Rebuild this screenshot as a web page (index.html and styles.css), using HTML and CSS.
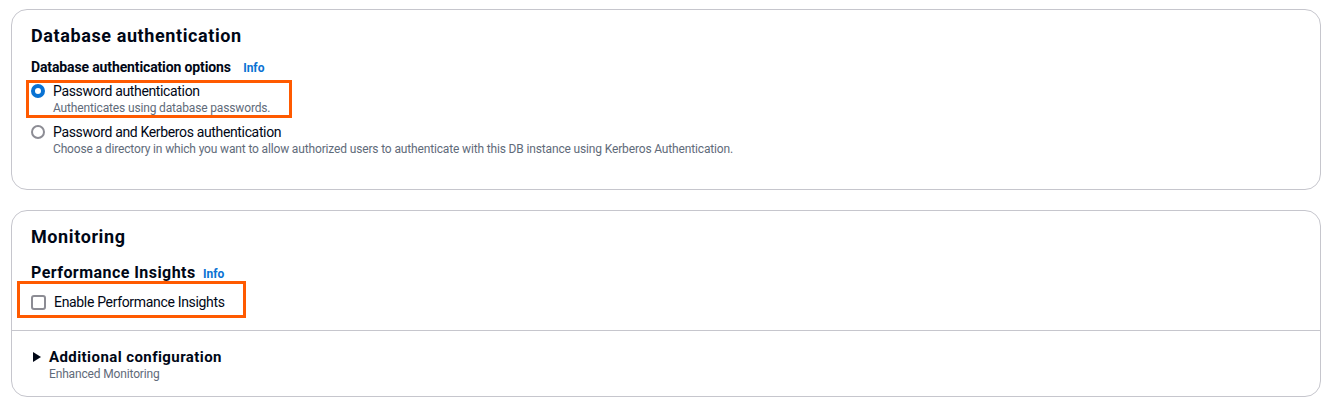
FILE: index.html
```html
<!DOCTYPE html>
<html lang="en">
<head>
<meta charset="utf-8">
<title>Database settings</title>
<link rel="stylesheet" href="styles.css">
</head>
<body>
<main class="page">
  <section class="card card-auth">
    <h2 class="card-title">Database authentication</h2>
    <div class="field-label">Database authentication options <a class="info" href="#">Info</a></div>
    <div class="radio-group">
      <label class="radio-item">
        <span class="radio radio-checked"></span>
        <span class="radio-text">
          <span class="radio-label">Password authentication</span>
          <span class="radio-desc">Authenticates using database passwords.</span>
        </span>
      </label>
      <label class="radio-item">
        <span class="radio"></span>
        <span class="radio-text">
          <span class="radio-label">Password and Kerberos authentication</span>
          <span class="radio-desc">Choose a directory in which you want to allow authorized users to authenticate with this DB instance using Kerberos Authentication.</span>
        </span>
      </label>
    </div>
    <div class="highlight highlight-auth"></div>
  </section>

  <section class="card card-monitor">
    <div class="card-body">
      <h2 class="card-title">Monitoring</h2>
      <div class="sub-title">Performance Insights <a class="info" href="#">Info</a></div>
      <label class="check-item">
        <span class="checkbox"></span>
        <span class="check-label">Enable Performance Insights</span>
      </label>
    </div>
    <div class="expand">
      <span class="caret"></span>
      <div class="expand-text">
        <div class="expand-title">Additional configuration</div>
        <div class="expand-desc">Enhanced Monitoring</div>
      </div>
    </div>
    <div class="highlight highlight-monitor"></div>
  </section>
</main>
</body>
</html>
```

FILE: styles.css
```css
* { box-sizing: border-box; }
html, body { margin: 0; padding: 0; background: #ffffff; }
body {
  font-family: Roboto, "Open Sans", Arial, sans-serif;
  color: #000716;
  width: 1336px;
  height: 403px;
  overflow: hidden;
}
.page {
  padding: 9px 15px 0 11px;
  display: flex;
  flex-direction: column;
  gap: 20px;
}
.card {
  position: relative;
  border: 1px solid #c6c6cd;
  border-radius: 16px;
  background: #fff;
}
.card-auth {
  height: 181px;
  padding: 15px 19px 0 19px;
}
.card-title {
  margin: 0;
  font-size: 18px;
  line-height: 22px;
  font-weight: 700;
  letter-spacing: 0.6px;
}
.field-label {
  margin-top: 10px;
  font-size: 14px;
  line-height: 20px;
  font-weight: 700;
  letter-spacing: -0.13px;
}
.info {
  color: #0972d3;
  font-size: 12px;
  font-weight: 700;
  letter-spacing: 0;
  text-decoration: none;
  margin-left: 9px;
}
.radio-group {
  margin-top: 4px;
  display: flex;
  flex-direction: column;
  gap: 7px;
}
.radio-item {
  display: flex;
  align-items: flex-start;
  gap: 8px;
}
.radio {
  flex: none;
  width: 14px;
  height: 14px;
  margin-top: 2px;
  border-radius: 50%;
  border: 2px solid #8c8c94;
  background: #fff;
}
.radio-checked {
  border: 4px solid #0972d3;
}
.radio-text { display: flex; flex-direction: column; }
.radio-label { font-size: 14px; line-height: 18px; letter-spacing: -0.35px; }
.radio-desc { font-size: 12px; line-height: 16px; color: #5f6b7a; letter-spacing: -0.15px; }

.card-monitor { height: 187px; }
.card-body {
  padding: 15px 19px 0 19px;
  height: 120px;
  border-bottom: 1px solid #c6c6cd;
}
.sub-title {
  margin-top: 15px;
  font-size: 16px;
  line-height: 20px;
  font-weight: 700;
  letter-spacing: 0.45px;
}
.sub-title .info { margin-left: 3px; }
.check-item {
  margin-top: 8px;
  display: flex;
  align-items: center;
  gap: 8px;
  height: 20px;
}
.checkbox {
  flex: none;
  width: 15px;
  height: 15px;
  border: 2px solid #8c8c94;
  border-radius: 3px;
  background: #fff;
}
.check-label { font-size: 14px; line-height: 20px; letter-spacing: -0.33px; }
.expand {
  display: flex;
  align-items: flex-start;
  gap: 8px;
  padding: 17px 19px 0 21px;
}
.caret {
  flex: none;
  width: 0;
  height: 0;
  margin-top: 4px;
  border-top: 5px solid transparent;
  border-bottom: 5px solid transparent;
  border-left: 8px solid #000716;
}
.expand-title { font-size: 15px; line-height: 18px; font-weight: 700; letter-spacing: 0.42px; }
.expand-desc { font-size: 12px; line-height: 16px; color: #5f6b7a; letter-spacing: -0.15px; }

.highlight {
  position: absolute;
  border: 3px solid #ff5a00;
  pointer-events: none;
}
.highlight-auth { left: 14px; top: 70px; width: 266px; height: 38px; }
.highlight-monitor { left: 5px; top: 70px; width: 229px; height: 37px; }
```
